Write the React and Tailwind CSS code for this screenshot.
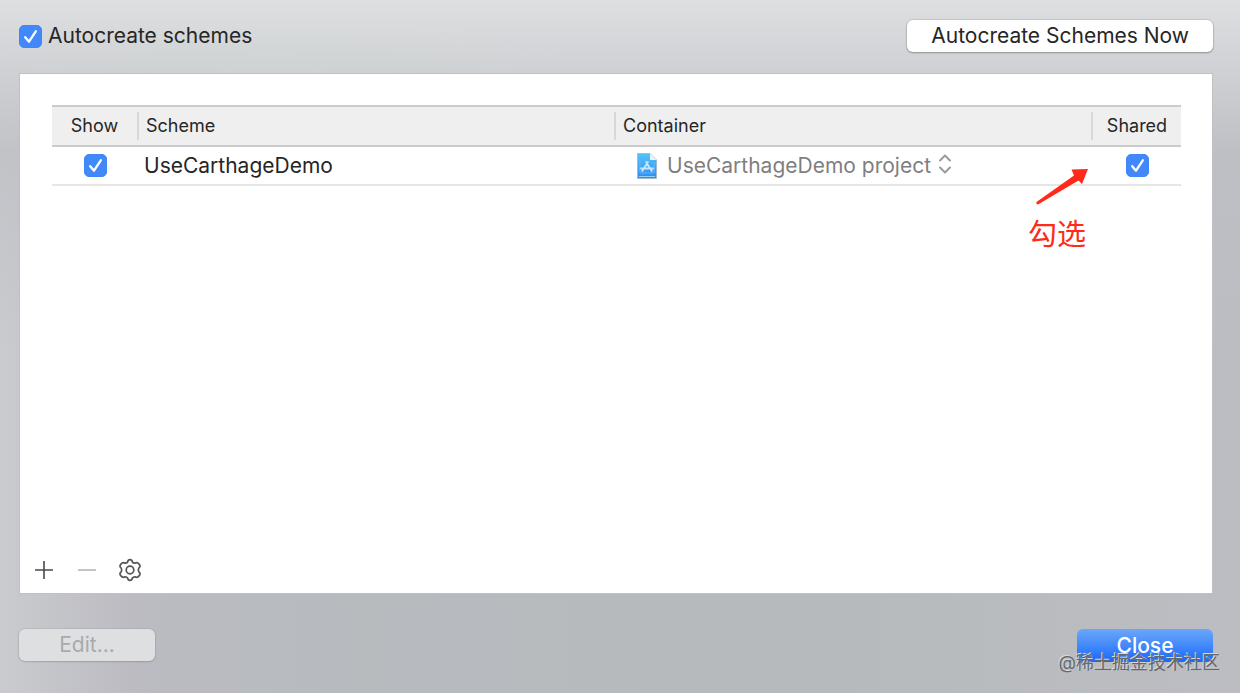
import { useState } from 'react'

function Checkbox({ id, label, checked, onChange }) {
  return (
    <span className="inline-grid size-[23px]">
      <input
        type="checkbox"
        id={id}
        aria-label={label}
        checked={checked}
        onChange={(e) => onChange(e.target.checked)}
        className="col-start-1 row-start-1 size-[23px] appearance-none rounded-[5px] border border-gray-300 bg-white checked:border-[#3f87f8] checked:bg-[#4189fb]"
      />
      {checked && (
        <svg viewBox="0 0 23 23" fill="none" className="pointer-events-none col-start-1 row-start-1 size-[23px]">
          <path d="M6.2 12.2 L10 16.7 L16.8 6.3" stroke="white" strokeWidth="2.3" strokeLinecap="round" strokeLinejoin="round" />
        </svg>
      )}
    </span>
  )
}

function ProjectIcon() {
  return (
    <svg viewBox="0 0 20 26" fill="none" className="h-[26px] w-5 shrink-0">
      <defs>
        <linearGradient id="doc" x1="0" y1="0" x2="0" y2="1">
          <stop offset="0" stopColor="#55c3f7" />
          <stop offset="1" stopColor="#2d8cf4" />
        </linearGradient>
      </defs>
      <path d="M0.5 0.5 H13 L19.5 7 V25.5 H0.5 Z" fill="url(#doc)" stroke="#a3bccf" />
      <path d="M2 23.5 H18" stroke="#8fd0fb" />
      <path d="M13 0.5 V7 H19.5 Z" fill="#e9f4fc" />
      <path d="M10.9 9 L5.3 18 M9.1 9 L14.7 18 M3.5 15.5 H11.5 M13.6 15.5 H16.5" stroke="#c4e7fd" strokeWidth="1.8" strokeLinecap="round" />
      <path d="M3 6 V20 M17 9 V20 M3.5 20 H16.5" stroke="#6fbcf9" strokeWidth="0.8" />
    </svg>
  )
}

function GearIcon() {
  return (
    <svg viewBox="0 0 24 24" fill="none" stroke="#555" strokeWidth="1.7" strokeLinejoin="round" className="size-6">
      <path d="M9.6 4 Q10 1.7 12 1.7 Q14 1.7 14.4 4 Q15.2 5.2 16.7 5.2 Q19.5 4 20.9 5.9 Q23.2 8.6 20.9 9.9 Q19.6 12 20.9 14.1 Q23.2 15.4 20.9 18.1 Q19.5 20 16.7 18.8 Q15.2 18.8 14.4 20 Q14 22.3 12 22.3 Q10 22.3 9.6 20 Q8.8 18.8 7.3 18.8 Q4.5 20 3.1 18.1 Q0.8 15.4 3.1 14.1 Q4.4 12 3.1 9.9 Q0.8 8.6 3.1 5.9 Q4.5 4 7.3 5.2 Q8.8 5.2 9.6 4 Z" />
      <circle cx="12" cy="12" r="3.8" />
    </svg>
  )
}

function App() {
  const [autocreate, setAutocreate] = useState(true)
  const [show, setShow] = useState(true)
  const [shared, setShared] = useState(true)

  return (
    <div className="relative flex min-h-screen flex-col bg-[linear-gradient(to_bottom,#dedfe1_0%,#dedfe100_22%),radial-gradient(ellipse_24%_30%_at_22%_14%,#bac4c0_0%,#bac4c000_100%),linear-gradient(to_bottom,#bfc0c5_12%,#bfc0c500_50%),linear-gradient(to_right,#cacbcf_0%,#bbbbc1_11%,#b7bbbf_26%,#b6babc_65%,#bcbdc2_100%)] pr-[27px] pl-[19px] font-['Inter','Noto_Sans_CJK_SC',sans-serif] text-[#262626]">
      {/* Top bar */}
      <div className="flex h-[73px] items-start justify-between pt-5">
        <div className="flex h-8 items-center gap-1.5">
          <Checkbox id="autocreate" checked={autocreate} onChange={setAutocreate} />
          <label htmlFor="autocreate" className="text-[21px]">Autocreate schemes</label>
        </div>
        <button type="button" className="h-8 rounded-md bg-white px-6 text-[21px] shadow-[0_0_1px_1px_#00000018,0_1px_2px_#00000040]">
          Autocreate Schemes Now
        </button>
      </div>

      {/* Scheme list */}
      <div className="relative flex min-h-[521px] flex-col border border-[#c0c1c3] bg-white pr-[31px] pl-8 pt-[31px]">
        <table className="w-full table-fixed border-collapse">
          <colgroup>
            <col className="w-[87px]" />
            <col />
            <col />
            <col className="w-[88px]" />
          </colgroup>
          <thead>
            <tr className="h-10 border-y-2 border-[#cbcbcb] bg-[#efefef] text-left text-lg">
              <th className="p-0 font-normal">
                <div className="flex h-7 items-center justify-center border-r-2 border-[#d8d8d8]">Show</div>
              </th>
              <th className="p-0 font-normal">
                <div className="flex h-7 items-center border-r-2 border-[#d8d8d8] pl-[7px]">Scheme</div>
              </th>
              <th className="p-0 font-normal">
                <div className="flex h-7 items-center border-r-2 border-[#d8d8d8] pl-[7px]">Container</div>
              </th>
              <th className="p-0 text-center font-normal">Shared</th>
            </tr>
          </thead>
          <tbody>
            <tr className="h-[39px] border-b-2 border-[#e6e6e6] text-[21px]">
              <td className="p-0">
                <div className="flex justify-center">
                  <Checkbox label="Show" checked={show} onChange={setShow} />
                </div>
              </td>
              <td className="p-0 pl-[5px]">UseCarthageDemo</td>
              <td className="p-0 pl-[21px]">
                <div className="flex items-center">
                  <ProjectIcon />
                  <select aria-label="Container" className="ml-2.5 appearance-none bg-transparent text-[#7f7f7f]">
                    <option>UseCarthageDemo project</option>
                  </select>
                  <svg viewBox="0 0 14 20" fill="none" stroke="#9a9a9a" strokeWidth="2" strokeLinecap="round" strokeLinejoin="round" className="pointer-events-none mb-1 ml-1.5 h-5 w-3.5">
                    <path d="M2 6.5 L7 1.5 L12 6.5 M2 13.5 L7 18.5 L12 13.5" />
                  </svg>
                </div>
              </td>
              <td className="p-0">
                <div className="flex justify-center">
                  <Checkbox label="Shared" checked={shared} onChange={setShared} />
                </div>
              </td>
            </tr>
          </tbody>
        </table>

        {/* Annotation */}
        <div className="pointer-events-none absolute top-[94px] right-[124px] flex flex-col items-start text-[#ff2a1a]">
          <svg viewBox="0 0 52 37" fill="currentColor" className="ml-2 h-[37px] w-[52px]">
            <path d="M0.5 34 L38 7.5 L35.5 1.5 L52 1 L46 16 L42.5 12.5 L2 36.5 Q0 36.5 0.5 34 Z" />
          </svg>
          <span className="mt-2.5 text-[29px] leading-10">勾选</span>
        </div>

        {/* List actions */}
        <div className="-ml-5 mt-auto mb-[11px] flex items-center gap-[19px]">
          <button type="button" aria-label="Add" className="grid size-6 place-items-center">
            <svg viewBox="0 0 24 24" stroke="#4a4a4a" strokeWidth="1.6" className="size-6">
              <path d="M3 12 H21 M12 3 V21" />
            </svg>
          </button>
          <button type="button" aria-label="Remove" disabled className="grid size-6 place-items-center">
            <svg viewBox="0 0 24 24" stroke="#b5b5b5" strokeWidth="1.6" className="size-6">
              <path d="M3 12 H21" />
            </svg>
          </button>
          <button type="button" aria-label="Settings" className="grid size-6 place-items-center">
            <GearIcon />
          </button>
        </div>
      </div>

      {/* Footer */}
      <div className="flex justify-between pt-[35px]">
        <button type="button" disabled className="h-8 w-[136px] rounded-md bg-[#dedfe1] text-[21px] text-[#a9aaad] shadow-[0_0_1px_1px_#00000010,0_1px_2px_#00000020]">
          Edit...
        </button>
        <button type="button" className="h-[33px] w-[136px] rounded-md bg-linear-to-b from-[#6ba6f8] to-[#1568fb] text-[21px] font-medium text-white">
          Close
        </button>
      </div>

      <span className="pointer-events-none absolute right-5 bottom-[18px] text-lg leading-6 text-[#66686c] [text-shadow:-1px_-1px_0_#d8d9db]">
        @稀土掘金技术社区
      </span>
    </div>
  )
}

export default App
